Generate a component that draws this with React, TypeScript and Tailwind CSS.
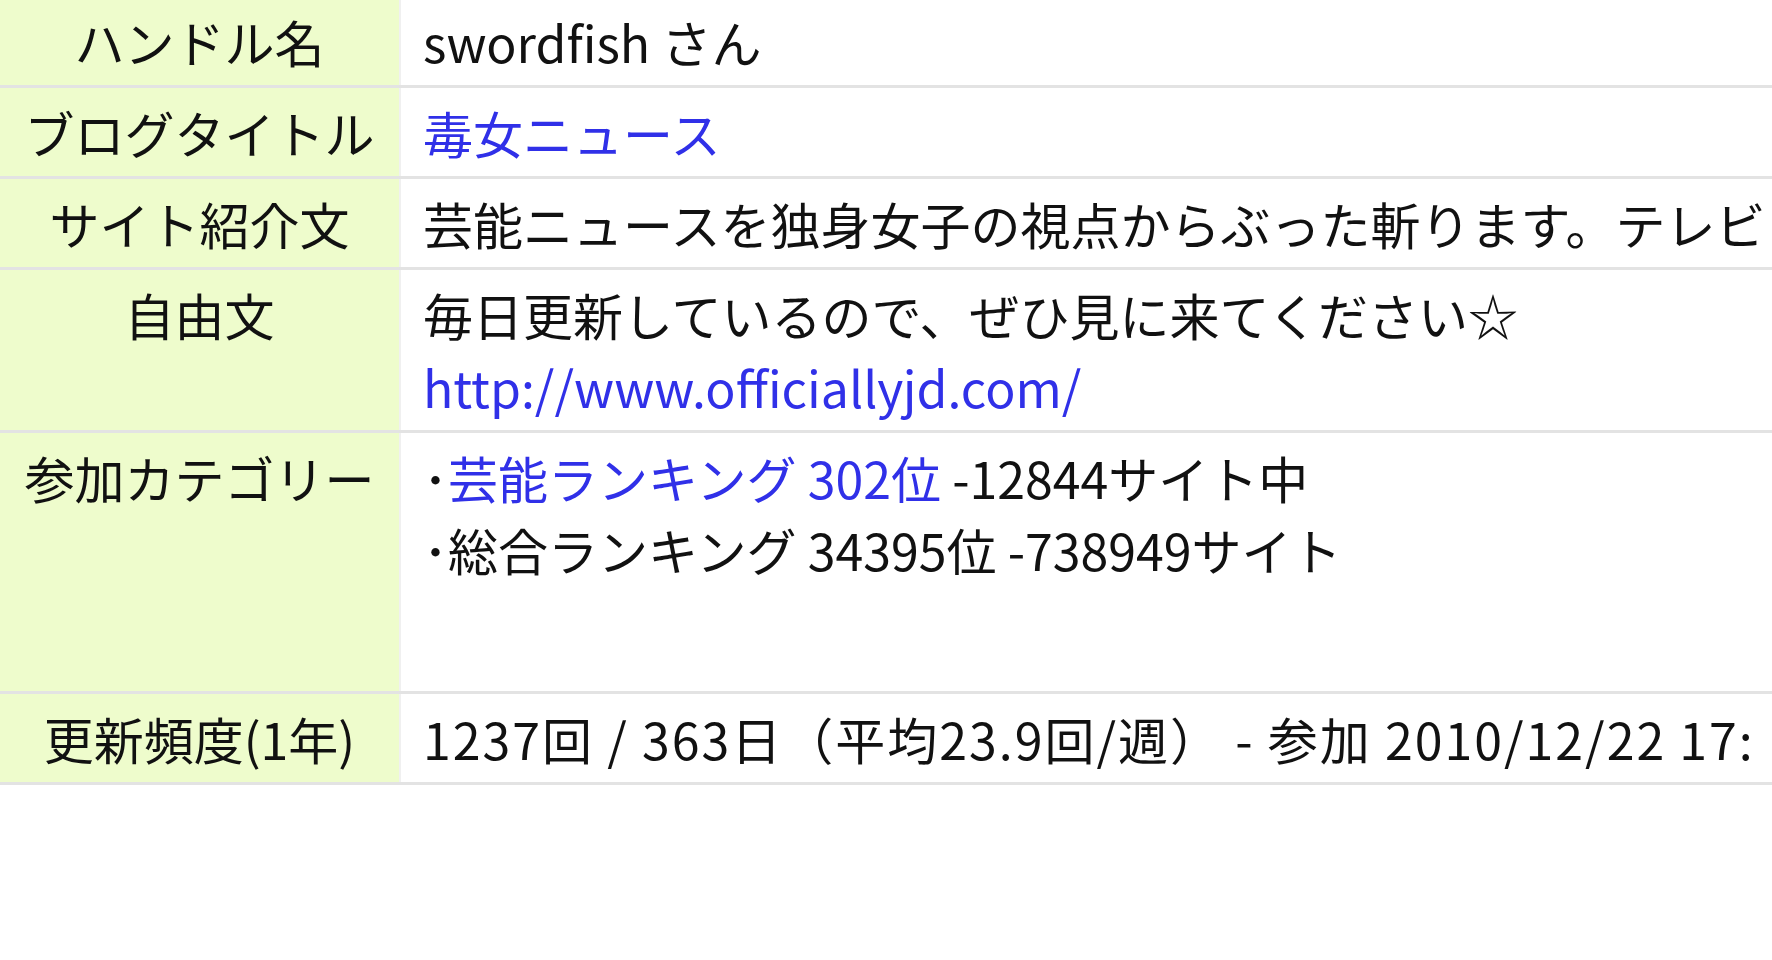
const BLUE = "text-[#3030e8]";

type Row = {
  label: string;
  body: React.ReactNode;
  bodyClass?: string;
};

const rows: Row[] = [
  { label: "ハンドル名", body: <span>swordfish さん</span> },
  { label: "ブログタイトル", body: <a className={BLUE}>毒女ニュース</a> },
  {
    label: "サイト紹介文",
    body: <span>芸能ニュースを独身女子の視点からぶった斬ります。テレビ</span>,
  },
  {
    label: "自由文",
    body: (
      <>
        <div>毎日更新しているので、ぜひ見に来てください☆</div>
        <a className={BLUE}>http://www.officiallyjd.com/</a>
      </>
    ),
  },
  {
    label: "参加カテゴリー",
    bodyClass: "h-[242px]",
    body: (
      <>
        <div>
          ･<a className={BLUE}>芸能ランキング 302位</a> -12844サイト中
        </div>
        <div>･総合ランキング 34395位 -738949サイト</div>
      </>
    ),
  },
  {
    label: "更新頻度(1年)",
    bodyClass: "tracking-[2px]",
    body: <span>1237回 / 363日（平均23.9回/週） - 参加 2010/12/22 17:</span>,
  },
];

export default function App() {
  return (
    <div className="w-[1772px] h-[960px] overflow-hidden bg-white">
      <table className="-mt-[6px] w-[2600px] table-fixed border-collapse font-['Noto_Sans_CJK_JP',sans-serif] text-[50px] leading-[72px] text-[#111]">
        <colgroup>
          <col className="w-[400px]" />
          <col />
        </colgroup>
        <tbody>
          {rows.map((row) => (
            <tr key={row.label} className="border-y-[3px] border-[#e3e3e3]">
              <th className="bg-[#eefccc] border-r-2 border-[#f0f0f0] px-1 py-2 align-top text-center font-normal whitespace-nowrap">
                {row.label}
              </th>
              <td className="py-2 pl-[22px] align-top whitespace-nowrap">
                <div className={row.bodyClass}>{row.body}</div>
              </td>
            </tr>
          ))}
        </tbody>
      </table>
    </div>
  );
}
